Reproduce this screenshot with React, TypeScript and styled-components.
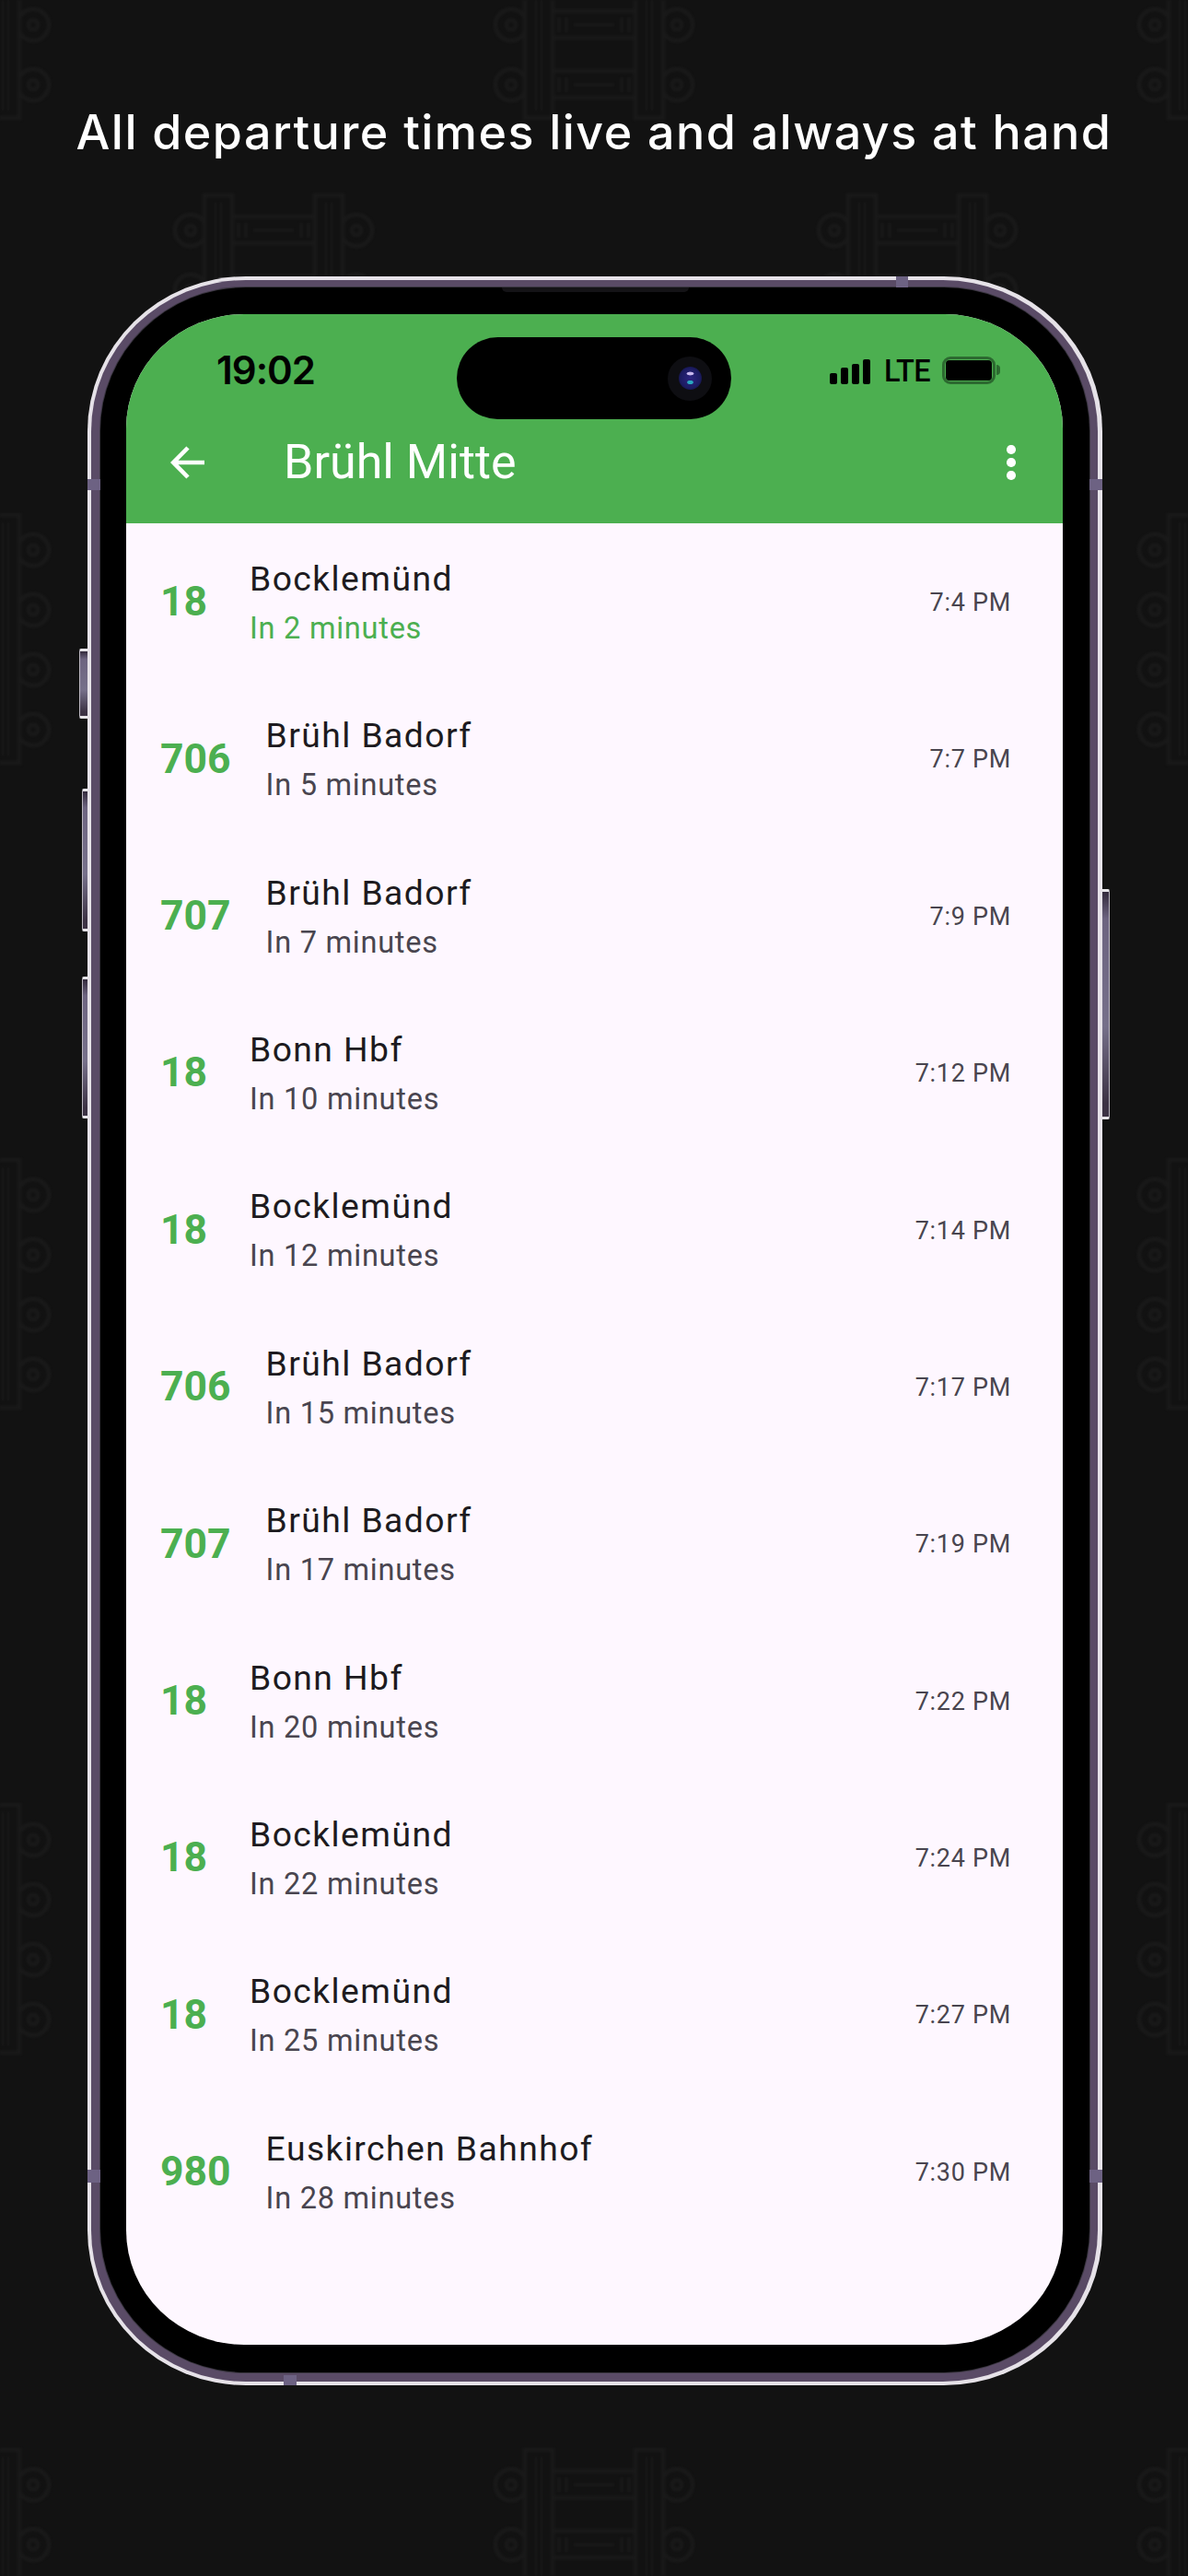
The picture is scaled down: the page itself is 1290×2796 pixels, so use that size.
import React from 'react';
import styled, { createGlobalStyle } from 'styled-components';

const GlobalStyle = createGlobalStyle`
  html, body {
    margin: 0;
    padding: 0;
    background: #121212;
  }
  * {
    box-sizing: border-box;
  }
`;

const Page = styled.div`
  position: relative;
  width: 1290px;
  height: 2796px;
  overflow: hidden;
  background: #121212;
  font-family: Roboto, 'Liberation Sans', sans-serif;
`;

const Backdrop = styled.svg`
  position: absolute;
  left: 0;
  top: 0;
  filter: blur(1px);
`;

const Headline = styled.h1`
  position: relative;
  margin: 0;
  padding-top: 112px;
  height: 300px;
  text-align: center;
  font-family: Inter, 'Liberation Sans', sans-serif;
  font-size: 52px;
  line-height: 64px;
  font-weight: 500;
  letter-spacing: 1.45px;
  white-space: nowrap;
  color: #ffffff;
`;

const Frame = styled.div`
  position: relative;
  margin-left: 95px;
  width: 1102px;
  height: 2289px;
  padding: 4px 5px 4px 4px;
  border-radius: 172px / 168px;
  background: #e6e2e8;
`;

const Metal = styled.div`
  height: 100%;
  padding: 8px 9px 10px 10px;
  border-radius: 168px / 164px;
  background: #5a4b66;
`;

const Bezel = styled.div`
  height: 100%;
  padding: 29px 29px 30px 28px;
  border-radius: 158px / 156px;
  background: #000000;
  box-shadow: 0 0 0 1px #3a3640;
`;

const Screen = styled.div`
  position: relative;
  display: flex;
  flex-direction: column;
  height: 100%;
  overflow: hidden;
  border-radius: 128px / 124px;
  background: #fef7ff;
`;

const Speaker = styled.div`
  position: absolute;
  left: 450px;
  top: 12px;
  width: 203px;
  height: 5px;
  border-radius: 0 0 6px 6px;
  background: #141316;
`;

const AntennaBand = styled.div<{ $x: number; $y: number; $w: number; $h: number }>`
  position: absolute;
  left: ${(p) => p.$x}px;
  top: ${(p) => p.$y}px;
  width: ${(p) => p.$w}px;
  height: ${(p) => p.$h}px;
  background: #6d6283;
`;

const SideButton = styled.div<{ $side: 'left' | 'right'; $top: number; $height: number; $width: number }>`
  position: absolute;
  top: ${(p) => p.$top}px;
  ${(p) => (p.$side === 'left' ? `right: 100%;` : `left: 100%;`)}
  width: ${(p) => p.$width}px;
  height: ${(p) => p.$height}px;
  background: linear-gradient(#332a3c 0, #6d6480 12%, #76708a 60%, #3c3244 94%);
  border-${(p) => p.$side}: 1.5px solid #bdb8c2;
  border-top: 3px solid #e6e4e8;
  border-bottom: 3px solid #e6e4e8;
  border-radius: ${(p) => (p.$side === 'left' ? '2px 0 0 2px' : '0 2px 2px 0')};
`;

const Header = styled.header`
  flex: none;
  height: 227px;
  background: #4caf50;
`;

const StatusBar = styled.div`
  display: flex;
  align-items: center;
  justify-content: space-between;
  height: 95px;
  padding: 27px 67px 0 98px;
`;

const Clock = styled.span`
  font-family: Inter, 'Liberation Sans', sans-serif;
  font-size: 42px;
  font-weight: 600;
  letter-spacing: -1px;
  line-height: 48px;
  color: #000000;
`;

const StatusIcons = styled.div`
  display: flex;
  align-items: center;
`;

const SignalBars = styled.div`
  display: flex;
  align-items: flex-end;
  gap: 4.3px;
  height: 27px;
  margin-right: 15px;
  margin-top: 2px;
`;

const SignalBar = styled.span<{ $height: number }>`
  width: 7.7px;
  height: ${(p) => p.$height}px;
  border-radius: 2px;
  background: #000000;
`;

const NetworkLabel = styled.span`
  margin-right: 13px;
  margin-top: 2px;
  font-size: 32.5px;
  font-weight: 500;
  line-height: 32px;
  letter-spacing: -0.6px;
  color: #000000;
`;

const Battery = styled.div`
  position: relative;
  width: 58px;
  height: 30px;
  margin-right: 6px;
  padding: 1px;
  border: 3px solid #2c6a30;
  border-radius: 9px;
  &::before {
    content: '';
    display: block;
    height: 100%;
    border-radius: 4px;
    background: #000000;
  }
  &::after {
    content: '';
    position: absolute;
    left: 56px;
    top: 6px;
    width: 4px;
    height: 11px;
    border-radius: 0 5px 5px 0;
    background: #2c6a30;
  }
`;

const Island = styled.div`
  position: absolute;
  left: 359px;
  top: 25px;
  display: flex;
  align-items: center;
  justify-content: flex-end;
  width: 298px;
  height: 89px;
  padding-right: 21px;
  border-radius: 45px;
  background: #000000;
`;

const Camera = styled.div`
  display: flex;
  align-items: center;
  justify-content: center;
  width: 48px;
  height: 48px;
  border-radius: 50%;
  background: #0e0e12;
`;

const Lens = styled.div`
  width: 25px;
  height: 25px;
  border-radius: 50%;
  background:
    radial-gradient(ellipse 18% 9% at 50% 30%, #c8b8ee 0 70%, transparent 100%),
    radial-gradient(ellipse 16% 10% at 50% 68%, #2aa8c0 0 70%, transparent 100%),
    radial-gradient(circle, #2c2480 0, #1c1c62 60%, #0c0c28 100%);
`;

const AppBar = styled.div`
  display: flex;
  align-items: center;
  height: 132px;
  padding: 0 48px 0 48px;
`;

const PageTitle = styled.div`
  flex: 1;
  margin-left: 86px;
  font-size: 52px;
  line-height: 60px;
  color: #ffffff;
`;

const MenuDots = styled.div`
  display: flex;
  flex-direction: column;
  gap: 4.5px;
  margin-right: 3.5px;
`;

const MenuDot = styled.span`
  width: 9.5px;
  height: 9.5px;
  border-radius: 50%;
  background: #ffffff;
`;

const DepartureList = styled.div`
  flex: 1;
`;

const DepartureRow = styled.div`
  display: flex;
  align-items: center;
  gap: 38px;
  height: 170.4px;
  padding: 0 56px 0 37px;
`;

const LineNumber = styled.span`
  min-width: 59px;
  font-size: 44.5px;
  font-weight: 700;
  color: #4caf50;
`;

const RowBody = styled.div`
  flex: 1;
  min-width: 0;
  padding-bottom: 1px;
`;

const Destination = styled.div`
  font-size: 37.3px;
  line-height: 56px;
  letter-spacing: 1.42px;
  color: #1d1b20;
`;

const Countdown = styled.div<{ $soon?: boolean }>`
  margin-top: 3px;
  font-size: 32.6px;
  line-height: 46.6px;
  letter-spacing: 0.72px;
  color: ${(p) => (p.$soon ? '#4caf50' : '#49454f')};
`;

const DepartureTime = styled.span`
  margin-top: 1.5px;
  font-size: 27px;
  line-height: 40px;
  letter-spacing: 0.7px;
  color: #49454f;
`;

const departures = [
  { line: '18', to: 'Bocklemünd', mins: 2, time: '7:4 PM' },
  { line: '706', to: 'Brühl Badorf', mins: 5, time: '7:7 PM' },
  { line: '707', to: 'Brühl Badorf', mins: 7, time: '7:9 PM' },
  { line: '18', to: 'Bonn Hbf', mins: 10, time: '7:12 PM' },
  { line: '18', to: 'Bocklemünd', mins: 12, time: '7:14 PM' },
  { line: '706', to: 'Brühl Badorf', mins: 15, time: '7:17 PM' },
  { line: '707', to: 'Brühl Badorf', mins: 17, time: '7:19 PM' },
  { line: '18', to: 'Bonn Hbf', mins: 20, time: '7:22 PM' },
  { line: '18', to: 'Bocklemünd', mins: 22, time: '7:24 PM' },
  { line: '18', to: 'Bocklemünd', mins: 25, time: '7:27 PM' },
  { line: '980', to: 'Euskirchen Bahnhof', mins: 28, time: '7:30 PM' }
];

const TrackIcon = () => (
  <g fill="none" stroke="#191919" strokeWidth="4.5">
    {[40, 105, 170, 235].map((cy) => (
      <g key={cy}>
        <path d={`M35 ${cy - 8}A17 17 0 1 0 35 ${cy + 8}`} />
        <circle cx="20" cy={cy} r="5" />
        <path d={`M185 ${cy - 8}A17 17 0 1 1 185 ${cy + 8}`} />
        <circle cx="200" cy={cy} r="5" />
        <path d={`M65 ${cy - 15}H155M65 ${cy + 14}H155`} />
        <path d={`M72 ${cy - 8}V${cy + 8}M80 ${cy - 8}V${cy + 8}M140 ${cy - 8}V${cy + 8}M148 ${cy - 8}V${cy + 8}M88 ${cy}H132`} strokeWidth="3" />
      </g>
    ))}
    <rect x="35" y="2" width="30" height="269" />
    <rect x="155" y="2" width="30" height="269" />
    <path d="M47 10V263M53 10V263M167 10V263M173 10V263" strokeWidth="2" />
  </g>
);

export default function App() {
  return (
    <Page>
      <GlobalStyle />
      <Backdrop width="1290" height="2796">
        <defs>
          <pattern id="tracks" x="-164" y="-143" width="699" height="700" patternUnits="userSpaceOnUse">
            <TrackIcon />
            <g transform="translate(351 353)">
              <TrackIcon />
            </g>
            <g transform="translate(-348 353)">
              <TrackIcon />
            </g>
          </pattern>
        </defs>
        <rect width="1290" height="2796" fill="url(#tracks)" />
      </Backdrop>
      <Headline>All departure times live and always at hand</Headline>
      <Frame>
        <SideButton $side="left" $top={404} $height={76} $width={9} />
        <SideButton $side="left" $top={556} $height={155} $width={6} />
        <SideButton $side="left" $top={760} $height={154} $width={6} />
        <SideButton $side="right" $top={665} $height={250} $width={8} />
        <Metal>
          <Bezel>
            <Screen>
              <Header>
                <StatusBar>
                  <Clock>19:02</Clock>
                  <StatusIcons>
                    <SignalBars>
                      <SignalBar $height={12} />
                      <SignalBar $height={18} />
                      <SignalBar $height={22} />
                      <SignalBar $height={27} />
                    </SignalBars>
                    <NetworkLabel>LTE</NetworkLabel>
                    <Battery />
                  </StatusIcons>
                </StatusBar>
                <AppBar>
                  <svg width="37" height="36" viewBox="0 0 37 36" fill="none" stroke="#ffffff" strokeWidth="4.6">
                    <path d="M37 18H4M19 2L3.2 18L19 34" />
                  </svg>
                  <PageTitle>Brühl Mitte</PageTitle>
                  <MenuDots>
                    <MenuDot />
                    <MenuDot />
                    <MenuDot />
                  </MenuDots>
                </AppBar>
              </Header>
              <Island>
                <Camera>
                  <Lens />
                </Camera>
              </Island>
              <DepartureList>
                {departures.map((d, i) => (
                  <DepartureRow key={i}>
                    <LineNumber>{d.line}</LineNumber>
                    <RowBody>
                      <Destination>{d.to}</Destination>
                      <Countdown $soon={i === 0}>In {d.mins} minutes</Countdown>
                    </RowBody>
                    <DepartureTime>{d.time}</DepartureTime>
                  </DepartureRow>
                ))}
              </DepartureList>
            </Screen>
          </Bezel>
        </Metal>
        <Speaker />
        <AntennaBand $x={878} $y={0} $w={13} $h={12} />
        <AntennaBand $x={213} $y={2278} $w={14} $h={11} />
        <AntennaBand $x={0} $y={220} $w={14} $h={12} />
        <AntennaBand $x={1088} $y={220} $w={14} $h={12} />
        <AntennaBand $x={0} $y={2055} $w={14} $h={14} />
        <AntennaBand $x={1088} $y={2055} $w={14} $h={14} />
      </Frame>
    </Page>
  );
}
